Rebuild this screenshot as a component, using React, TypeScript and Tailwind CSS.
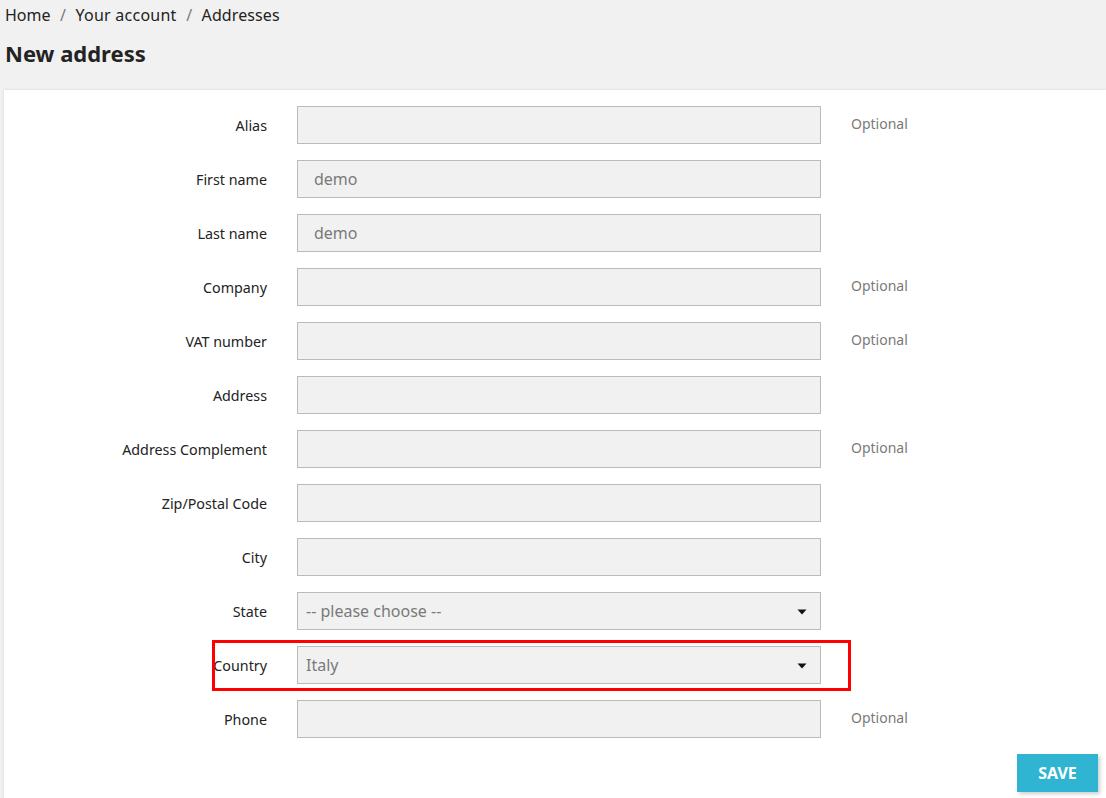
const fields: { label: string; value?: string; optional?: boolean; select?: boolean; highlight?: boolean }[] = [
  { label: 'Alias', optional: true },
  { label: 'First name', value: 'demo' },
  { label: 'Last name', value: 'demo' },
  { label: 'Company', optional: true },
  { label: 'VAT number', optional: true },
  { label: 'Address' },
  { label: 'Address Complement', optional: true },
  { label: 'Zip/Postal Code' },
  { label: 'City' },
  { label: 'State', select: true, value: '-- please choose --' },
  { label: 'Country', select: true, value: 'Italy', highlight: true },
  { label: 'Phone', optional: true },
];

function Caret() {
  return (
    <svg width="10" height="6" viewBox="0 0 10 6" className="absolute right-[13px] top-[16px]">
      <path d="M0.5 0.5 L9.5 0.5 L5 5.5 Z" fill="#111" />
    </svg>
  );
}

export default function App() {
  return (
    <div className="min-h-screen w-full overflow-hidden bg-[#f1f1f1] text-[#232323]" style={{ fontFamily: '"Noto Sans", "Open Sans", sans-serif' }}>
      <nav className="pl-[5px] pt-[3px] text-[16px] leading-[24px] flex items-center">
        <span>Home</span>
        <span className="mx-[9.5px] text-[#7a7a7a]">/</span>
        <span className="tracking-[0.25px]">Your account</span>
        <span className="mx-[9.5px] text-[#7a7a7a]">/</span>
        <span className="tracking-[0.1px]">Addresses</span>
      </nav>
      <h1 className="pl-[5px] mt-[11px] text-[22px] leading-[30px] font-bold">New address</h1>

      <div className="ml-[4px] mt-[22px] bg-white shadow-[0_0_3px_rgba(0,0,0,0.12)] pt-[16px] pb-[6px]">
        <div className="flex flex-col gap-[16px]">
          {fields.map(f => (
            <div key={f.label} className="relative flex items-center h-[38px]">
              <label className="w-[263px] mt-[2px] text-right text-[14.3px] leading-[20px]">{f.label}</label>
              <div className="relative ml-[30px] w-[524px] h-[38px] bg-[#f1f1f1] border border-[#bbbbbb]">
                {f.value && (
                  <span className={`absolute top-0 h-full flex items-center text-[16px] text-[#7a7a7a] ${f.select ? 'left-[8px]' : 'left-[16px]'}`}>
                    {f.value}
                  </span>
                )}
                {f.select && <Caret />}
              </div>
              {f.optional && <span className="ml-[30px] mb-[3px] text-[14px] leading-[20px] text-[#7a7a7a]">Optional</span>}
              {f.highlight && (
                <div className="absolute left-[208px] top-[-6px] w-[639px] h-[51px] border-[3px] border-[#ff0000]" />
              )}
            </div>
          ))}
        </div>
        <div className="flex justify-end mt-[16px] pr-[8px]">
          <button className="w-[81px] h-[38px] bg-[#2fb5d2] text-white font-bold text-[16px] uppercase shadow-[2px_2px_4px_rgba(0,0,0,0.2)]">
            Save
          </button>
        </div>
      </div>
    </div>
  );
}
